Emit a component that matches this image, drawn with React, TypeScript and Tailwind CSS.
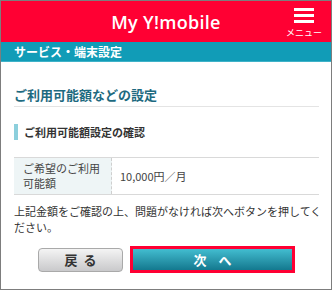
export default function App() {
  const jp = { fontFamily: '"Noto Sans CJK JP", "Noto Sans", sans-serif' };
  return (
    <div className="w-[332px] h-[290px] border border-[#7d7d7d] bg-white overflow-hidden" style={jp}>
      <header className="relative h-[41px] bg-[#ff0033] flex items-center justify-center">
        <span
          className="text-white text-[18px] font-semibold tracking-[0.3px] pt-[2px]"
          style={{ fontFamily: '"Open Sans", "Liberation Sans", sans-serif' }}
        >
          My Y!mobile
        </span>
        <div className="absolute right-[9px] top-[7px] flex flex-col items-center">
          <div className="flex flex-col gap-[3px] w-[20px]">
            <span className="block h-[3px] bg-white" />
            <span className="block h-[3px] bg-white" />
            <span className="block h-[3px] bg-white" />
          </div>
          <span className="text-white text-[9px] leading-none mt-[5px]">メニュー</span>
        </div>
      </header>
      <div className="h-[20px] bg-[#119cb7] border-b border-[#3fb2c8] flex items-center px-[13px]">
        <span className="text-white text-[12px] font-bold leading-none">サービス・端末設定</span>
      </div>
      <main className="pr-[12px] pl-[13px]">
        <h1 className="mt-[24px] pb-[2px] border-b border-[#e4e4e4] text-[13px] leading-[18px] font-bold text-[#1d6a80]">
          ご利用可能額などの設定
        </h1>
        <div className="mt-[17px] flex items-center h-[16px]">
          <span className="w-[4px] h-[16px] bg-[#8ccfdc]" />
          <span className="ml-[6px] text-[11px] font-bold text-[#333]">ご利用可能額設定の確認</span>
        </div>
        <div className="mt-[17px] flex border-y border-[#d9d9d9] h-[38px] text-[11px] text-[#444]">
          <div className="w-[98px] bg-[#eef5f6] border-r border-dashed border-[#cfcfcf] pl-[9px] flex flex-col justify-center leading-[15px]">
            <span>ご希望のご利用</span>
            <span>可能額</span>
          </div>
          <div className="flex-1 flex items-center pl-[8px]">10,000円／月</div>
        </div>
        <p className="mt-[8px] -mr-[6px] text-[11px] leading-[16px] text-[#333]">
          上記金額をご確認の上、問題がなければ次へボタンを押してください。
        </p>
        <div className="mt-[11px] flex justify-center items-center gap-[7px]">
          <button className="w-[85px] h-[24px] rounded-[4px] border border-[#a9a9a9] bg-gradient-to-b from-[#f4f4f4] to-[#c9c9cb] text-[13px] font-bold text-[#333] tracking-[6px] pl-[6px]">
            戻る
          </button>
          <button className="w-[165px] h-[27px] border-[3px] border-[#ff0033] bg-gradient-to-b from-[#42bdd0] to-[#13798f] text-[13px] font-bold text-white tracking-[12px] pl-[12px]">
            次へ
          </button>
        </div>
      </main>
    </div>
  );
}
